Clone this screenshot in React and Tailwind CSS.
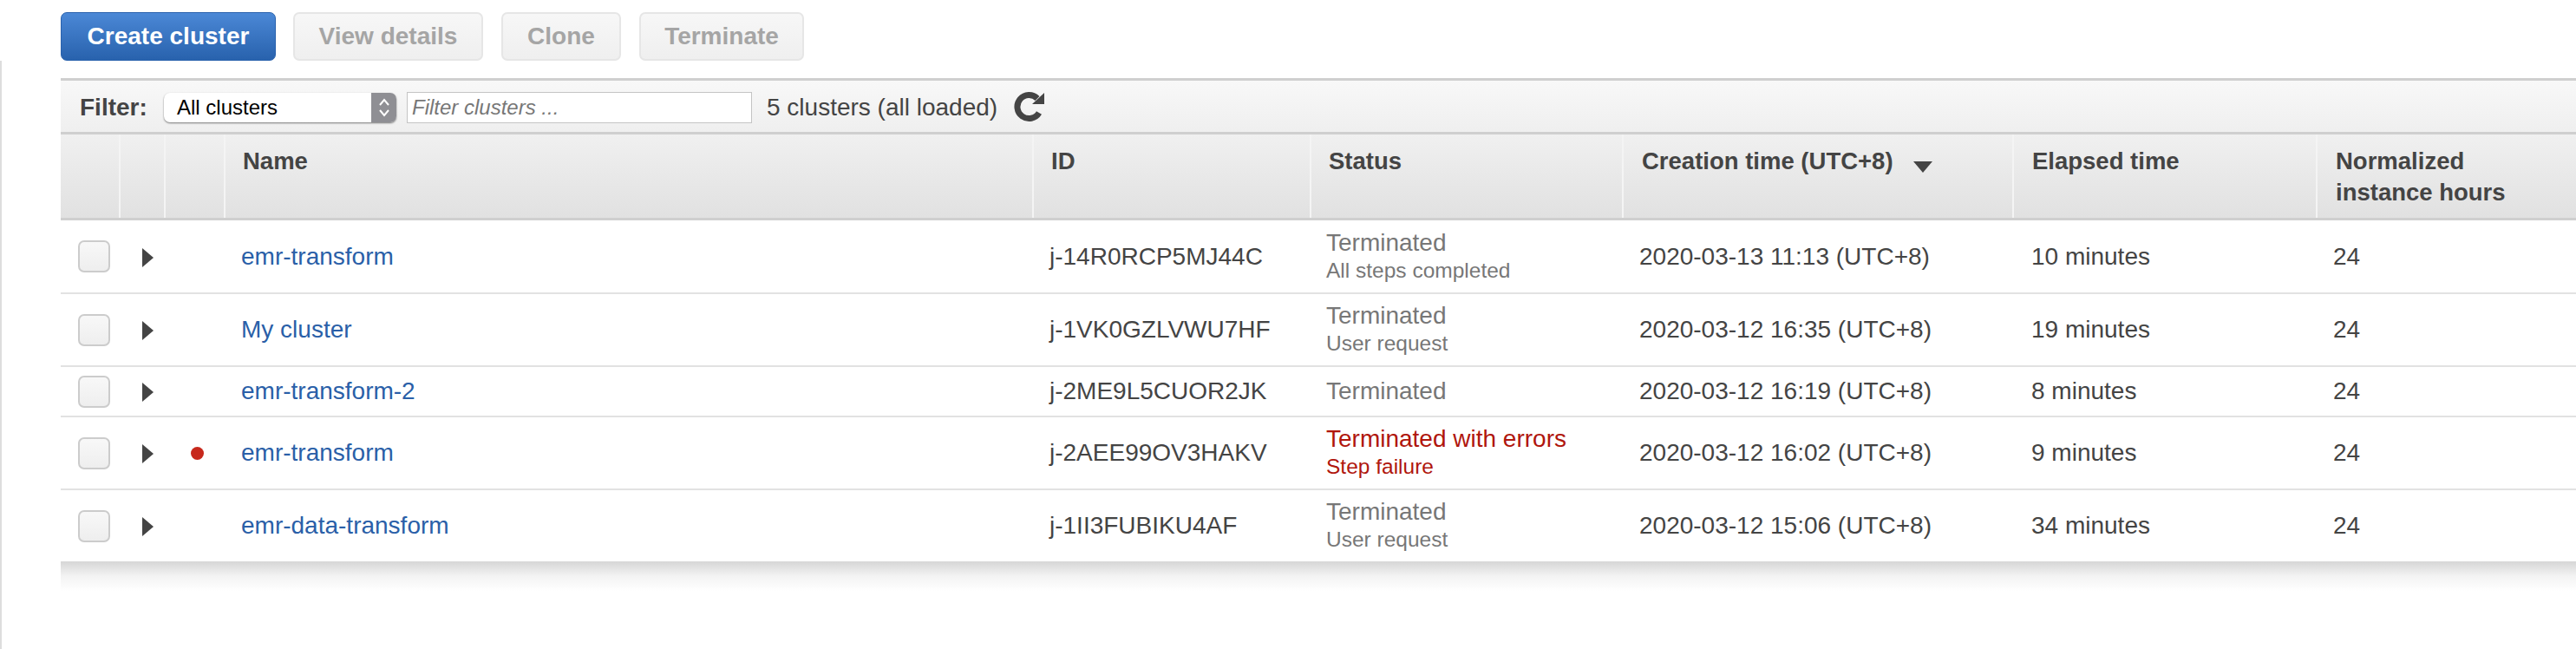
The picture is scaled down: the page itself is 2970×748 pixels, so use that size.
const COLS = "grid grid-cols-[67px_52px_69px_932px_320px_360px_450px_350px_300px]";

const rows = [
  { name: "emr-transform", id: "j-14R0RCP5MJ44C", status: "Terminated", sub: "All steps completed", time: "2020-03-13 11:13 (UTC+8)", elapsed: "10 minutes", h: "h-[85px]" },
  { name: "My cluster", id: "j-1VK0GZLVWU7HF", status: "Terminated", sub: "User request", time: "2020-03-12 16:35 (UTC+8)", elapsed: "19 minutes", h: "h-[84px]" },
  { name: "emr-transform-2", id: "j-2ME9L5CUOR2JK", status: "Terminated", time: "2020-03-12 16:19 (UTC+8)", elapsed: "8 minutes", h: "h-[58px]" },
  { name: "emr-transform", id: "j-2AEE99OV3HAKV", status: "Terminated with errors", sub: "Step failure", time: "2020-03-12 16:02 (UTC+8)", elapsed: "9 minutes", h: "h-[84px]", error: true },
  { name: "emr-data-transform", id: "j-1II3FUBIKU4AF", status: "Terminated", sub: "User request", time: "2020-03-12 15:06 (UTC+8)", elapsed: "34 minutes", h: "h-[82px]", last: true },
];

function Btn({ children, className }) {
  return (
    <button className={"h-[56px] rounded-[7px] border-2 border-[#e6e6e6] bg-gradient-to-b from-[#f7f7f7] to-[#efefef] text-[28px] font-bold text-[#a5a5a5] " + className}>
      {children}
    </button>
  );
}

function Refresh() {
  return (
    <svg width="36" height="36" viewBox="0 0 36 36" className="ml-[19px] -mt-[2px]">
      <path d="M27 8.5 A13.5 13.5 0 1 0 29 25" fill="none" stroke="#444444" strokeWidth="7" />
      <path d="M21 15 L35 15 L35 2 Z" fill="#444444" />
    </svg>
  );
}

function Head({ children, cls = "pl-[21px]" }) {
  return (
    <div className={"h-full pt-[13px] leading-[36px] text-[27.5px] font-bold text-[#444444] border-l-2 border-[#f4f4f4] " + cls}>
      {children}
    </div>
  );
}

export default function App() {
  return (
    <div className="flex w-[2970px] min-h-[748px] overflow-hidden bg-white font-['Liberation_Sans',Arial,sans-serif]">
      <div className="mt-[70px] w-[2px] shrink-0 bg-[#dddddd]" />
      <div className="ml-[68px] w-[2900px] shrink-0">
        <div className="flex h-[90px] pt-[14px] items-start">
          <button className="h-[56px] w-[248px] rounded-[7px] border border-[#2a62ad] bg-gradient-to-b from-[#4b88d6] to-[#2862ad] text-[28px] font-bold text-white">
            Create cluster
          </button>
          <Btn className="ml-[20px] w-[219px]">View details</Btn>
          <Btn className="ml-[21px] w-[138px]">Clone</Btn>
          <Btn className="ml-[21px] w-[190px]">Terminate</Btn>
        </div>

        <div className="flex h-[65px] items-center border-t-[3px] border-b-[3px] border-[#cfcfcf] bg-gradient-to-b from-[#f8f8f8] to-[#efefef] pl-[22px] pt-[2px]">
          <span className="w-[97px] text-[28px] font-bold text-[#444444]">Filter:</span>
          <div className="flex h-[34px] w-[268px] overflow-hidden rounded-[7px] bg-white shadow-[0_1px_2px_rgba(0,0,0,0.5)]">
            <span className="flex-1 pl-[15px] text-[24px] leading-[34px] text-black">All clusters</span>
            <span className="flex w-[29px] items-center justify-center bg-[#8f8f94]">
              <svg width="16" height="26" viewBox="0 0 16 26" fill="none" stroke="#ffffff" strokeWidth="2">
                <path d="M3 10 L8 4 L13 10" />
                <path d="M3 16 L8 22 L13 16" />
              </svg>
            </span>
          </div>
          <input
            readOnly
            placeholder="Filter clusters ..."
            className="ml-[12px] h-[36px] w-[398px] border border-[#c4c4c4] bg-white pl-[5px] text-[24px] italic outline-none placeholder:text-[#777777]"
          />
          <span className="ml-[17px] text-[28px] text-[#444444]">5 clusters (all loaded)</span>
          <Refresh />
        </div>

        <div className={COLS + " h-[99px] border-b-[3px] border-[#cfcfcf] bg-gradient-to-b from-[#f0f0f0] to-[#e1e1e1]"}>
          <div />
          <Head cls="" />
          <Head cls="" />
          <Head cls="pl-[20px]">Name</Head>
          <Head cls="pl-[20px]">ID</Head>
          <Head cls="pl-[20px]">Status</Head>
          <Head>
            <span className="inline-flex items-center">
              Creation time (UTC+8)
              <svg width="22" height="13" viewBox="0 0 22 13" className="ml-[23px] mt-[12px]">
                <path d="M0 0 H22 L11 13 Z" fill="#444444" />
              </svg>
            </span>
          </Head>
          <Head>Elapsed time</Head>
          <Head>Normalized<br />instance hours</Head>
        </div>

        {rows.map((r, i) => (
          <div key={i} className={COLS + " items-center text-[28px] text-[#444444] " + r.h + (r.last ? "" : " border-b-2 border-[#e2e2e2]")}>
            <div className="pl-[20px]">
              <div className="h-[37px] w-[37px] rounded-[7px] border-2 border-[#cccccc] bg-gradient-to-b from-[#f8f8f8] to-[#eeeeee]" />
            </div>
            <div className="pl-[27px]">
              <svg width="13" height="22" viewBox="0 0 13 22" className="block mt-[2px]">
                <path d="M0 0 L13 11 L0 22 Z" fill="#444444" />
              </svg>
            </div>
            <div className="pl-[31px]">
              {r.error && <div className="h-[15px] w-[15px] rounded-full bg-[#c7281c]" />}
            </div>
            <div className="pl-[20px] text-[#2a5fa8]">{r.name}</div>
            <div className="pl-[20px]">{r.id}</div>
            <div className="pl-[19px] leading-[32px]">
              <div className={r.error ? "text-[#b0160d]" : "text-[#777777]"}>{r.status}</div>
              {r.sub && <div className={"text-[24.5px] " + (r.error ? "text-[#b0160d]" : "text-[#777777]")}>{r.sub}</div>}
            </div>
            <div className="pl-[20px]">{r.time}</div>
            <div className="pl-[22px]">{r.elapsed}</div>
            <div className="pl-[20px]">24</div>
          </div>
        ))}

        <div className="h-[34px] bg-gradient-to-b from-[#d6d6d6] via-[#f3f3f3] to-white" />
      </div>
    </div>
  );
}
